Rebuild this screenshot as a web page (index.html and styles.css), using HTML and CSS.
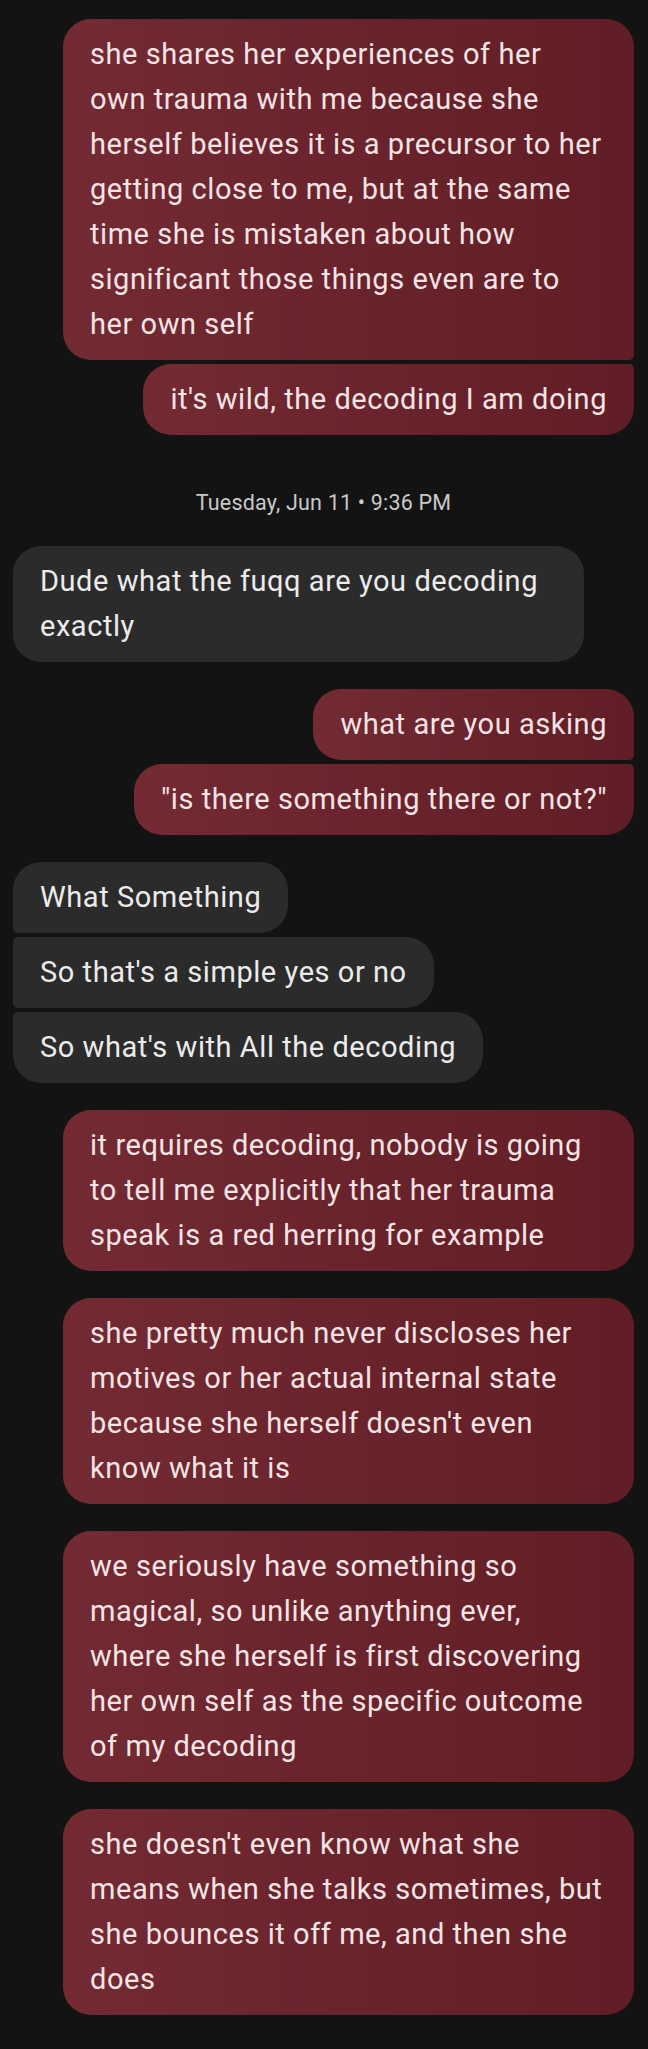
FILE: index.html
```html
<!DOCTYPE html>
<html lang="en">
<head>
<meta charset="utf-8">
<title>Messages</title>
<link rel="stylesheet" href="styles.css">
</head>
<body>
<main class="thread">
  <section class="group out">
    <div class="bubble first">she shares her experiences of her own&nbsp;trauma with me because she herself believes it is a precursor to her getting close to me, but at the same time she is mistaken about how significant those things even are to her own self</div>
    <div class="bubble last">it's wild, the decoding I am doing</div>
  </section>

  <div class="stamp">Tuesday, Jun 11 • 9:36 PM</div>

  <section class="group in after-stamp">
    <div class="bubble">Dude what the fuqq are you decoding exactly</div>
  </section>

  <section class="group out">
    <div class="bubble first">what are you asking</div>
    <div class="bubble last">"is there something there or not?"</div>
  </section>

  <section class="group in">
    <div class="bubble first">What Something</div>
    <div class="bubble mid">So that's a simple yes or no</div>
    <div class="bubble last">So what's with All the decoding</div>
  </section>

  <section class="group out">
    <div class="bubble">it requires decoding, nobody is going to tell me explicitly that her trauma speak is a red herring for example</div>
  </section>

  <section class="group out">
    <div class="bubble">she pretty much never discloses her motives or her actual internal state because she herself doesn't even know what it is</div>
  </section>

  <section class="group out">
    <div class="bubble">we seriously have something so magical, so unlike anything ever, where she herself is first discovering her own self as the specific outcome of my decoding</div>
  </section>

  <section class="group out">
    <div class="bubble">she doesn't even know what she means when she talks sometimes, but she bounces it off me, and then she does</div>
  </section>
</main>
</body>
</html>
```

FILE: styles.css
```css
* { box-sizing: border-box; }

html, body {
  margin: 0;
  padding: 0;
  background: #131313;
}

body {
  font-family: Roboto, "Noto Sans", "Liberation Sans", sans-serif;
  -webkit-font-smoothing: antialiased;
}

.thread {
  display: flex;
  flex-direction: column;
  padding: 19px 14px 30px 13px;
}

.group {
  display: flex;
  flex-direction: column;
  gap: 4px;
  margin-top: 27px;
}

.group:first-child { margin-top: 0; }

.group.out { align-items: flex-end; }
.group.in { align-items: flex-start; }

.group.after-stamp { margin-top: 31px; }

.bubble {
  max-width: 571px;
  padding: 13px 27px;
  font-size: 29px;
  line-height: 45px;
  letter-spacing: 0.55px;
  border-radius: 28px;
}

.out .bubble {
  background: linear-gradient(to right, #732a33, #611d25);
  color: #f4e4e5;
}

.in .bubble {
  background: #2b2b2b;
  color: #ebebeb;
}

.out .bubble.first { border-bottom-right-radius: 5px; }
.out .bubble.last { border-top-right-radius: 5px; }
.in .bubble.first { border-bottom-left-radius: 5px; }
.in .bubble.mid { border-top-left-radius: 5px; border-bottom-left-radius: 5px; }
.in .bubble.last { border-top-left-radius: 5px; }

.stamp {
  margin-top: 56px;
  text-align: center;
  font-size: 21.5px;
  line-height: 24px;
  color: #c9c9c9;
  letter-spacing: 0.2px;
}
```
